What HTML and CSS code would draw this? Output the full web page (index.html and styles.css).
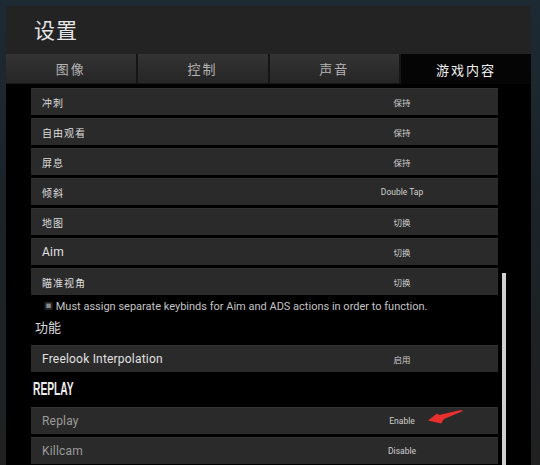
FILE: index.html
```html
<!DOCTYPE html>
<html lang="zh">
<head>
<meta charset="utf-8">
<title>设置</title>
<link rel="stylesheet" href="styles.css">
</head>
<body>
<div class="window">
  <header class="head"><h1 class="title">设置</h1></header>
  <nav class="tabs">
    <div class="tab">图像</div>
    <div class="tab">控制</div>
    <div class="tab">声音</div>
    <div class="tab active">游戏内容</div>
  </nav>
  <div class="content">
    <div class="list">
      <div class="row"><span class="label">冲刺</span><span class="value">保持</span></div>
      <div class="row"><span class="label">自由观看</span><span class="value">保持</span></div>
      <div class="row"><span class="label">屏息</span><span class="value">保持</span></div>
      <div class="row"><span class="label">倾斜</span><span class="value">Double Tap</span></div>
      <div class="row"><span class="label">地图</span><span class="value">切换</span></div>
      <div class="row"><span class="label en">Aim</span><span class="value">切换</span></div>
      <div class="row"><span class="label">瞄准视角</span><span class="value">切换</span></div>
      <div class="note"><span class="mark">▣</span> Must assign separate keybinds for Aim and ADS actions in order to function.</div>
      <div class="section">功能</div>
      <div class="row"><span class="label en">Freelook Interpolation</span><span class="value">启用</span></div>
      <div class="heading"><span class="heading-text">REPLAY</span></div>
      <div class="row"><span class="label en dim">Replay</span><span class="value">Enable</span>
        <svg class="arrow" viewBox="0 0 37 15" width="37" height="15"><path d="M1 11.5 L10 4.5 L12 6 L34 1 L36 2 L17 10 L14 14.5 Z" fill="#e8302f"/></svg>
      </div>
      <div class="row"><span class="label en dim">Killcam</span><span class="value">Disable</span></div>
    </div>
    <div class="track"><div class="thumb"></div></div>
  </div>
</div>
</body>
</html>
```
FILE: styles.css
```css
html, body {
  margin: 0;
  padding: 0;
}
body {
  width: 540px;
  height: 465px;
  overflow: hidden;
  background: linear-gradient(180deg, #1d2a33 0%, #1b2329 40%, #202020 100%);
  font-family: "Noto Sans CJK SC", "Liberation Sans", sans-serif;
  color: #ddd;
}
.window {
  margin: 6px 9px 0 6px;
  height: 459px;
  display: flex;
  flex-direction: column;
  background: #000;
}
.head {
  height: 48px;
  background: #232323;
  display: flex;
  align-items: center;
  padding-left: 28px;
}
.title {
  margin: 0;
  font-size: 21px;
  font-weight: normal;
  color: #e6e6e6;
  letter-spacing: 1px;
  line-height: 24px;
  margin-top: -2px;
}
.tabs {
  height: 30px;
  display: grid;
  grid-template-columns: 1fr 1fr 1fr 1fr;
  background: #151515;
  column-gap: 2px;
}
.tab {
  background: linear-gradient(180deg, #343434 0%, #2b2b2b 60%, #262626 100%);
  color: #b4b4b4;
  font-size: 13px;
  letter-spacing: 2px;
  display: flex;
  align-items: center;
  justify-content: center;
  border-bottom: 1px solid #1a1a1a;
}
.tab.active {
  background: #050505;
  color: #f2f2f2;
  border-bottom: none;
}
.content {
  flex: 1;
  display: flex;
  padding-left: 25px;
  overflow: hidden;
}
.list {
  width: 467px;
  padding-top: 4px;
}
.row {
  height: 27px;
  margin-bottom: 3px;
  background: #2a2a2a;
  border-top: 1px solid #333;
  box-sizing: border-box;
  display: flex;
  align-items: center;
  padding-left: 11px;
  position: relative;
}
.label {
  flex: 1;
  font-size: 10px;
  color: #dcdcdc;
  letter-spacing: 1px;
}
.label.en {
  font-family: "Roboto", "Liberation Sans", sans-serif;
  font-size: 12px;
  letter-spacing: 0.2px;
  color: #e0e0e0;
}
.label.dim {
  color: #9c9c9c;
}
.value {
  width: 120px;
  margin-right: 36px;
  text-align: center;
  font-family: "Roboto", "Noto Sans CJK SC", sans-serif;
  font-size: 8.5px;
  color: #cfcfcf;
}
.note {
  height: 17px;
  line-height: 17px;
  padding-left: 13px;
  font-family: "Roboto", "Liberation Sans", sans-serif;
  font-size: 11px;
  color: #c4c4c4;
  white-space: nowrap;
}
.mark {
  font-size: 9px;
  color: #888;
  vertical-align: 1px;
}
.section {
  height: 30px;
  line-height: 24px;
  padding-left: 4px;
  font-size: 13px;
  color: #d8d8d8;
}
.heading {
  height: 32px;
  line-height: 26px;
  padding-left: 2px;
}
.heading-text {
  display: inline-block;
  font-family: "Liberation Sans", sans-serif;
  font-weight: bold;
  font-size: 19px;
  color: #ededed;
  transform: scaleX(0.54);
  transform-origin: left center;
}
.arrow {
  position: absolute;
  left: 396px;
  top: 1px;
}
.track {
  width: 4px;
  margin-left: 4px;
}
.thumb {
  margin-top: 189px;
  height: 200px;
  background: #d0d0d0;
}
```
